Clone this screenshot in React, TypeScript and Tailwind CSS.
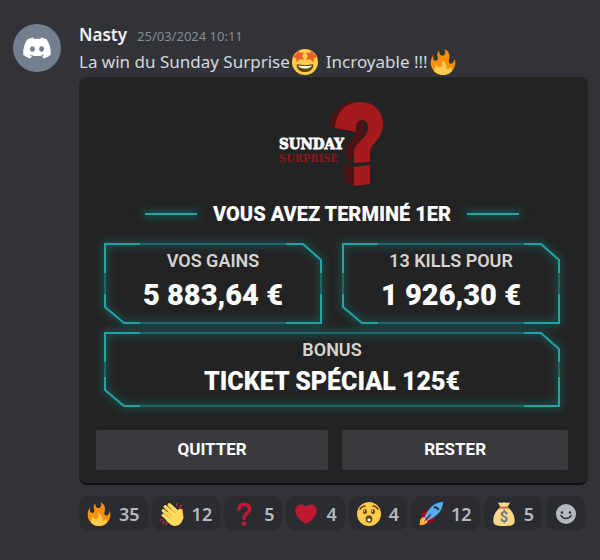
import type { ReactNode } from "react";
import { FaDiscord } from "react-icons/fa";

type IconProps = { className?: string };

function FireEmoji({ className }: IconProps) {
  return (
    <svg viewBox="0 0 36 36" className={className} aria-hidden="true">
      <path
        fill="#F4900C"
        d="M35 19c0-2.062-.367-4.039-1.04-5.868-.46 5.389-3.333 8.157-6.335 6.868-2.812-1.208-.917-5.917-.777-8.164.236-3.809-.012-8.169-6.931-11.794 2.875 5.5.333 8.917-2.333 9.125-2.958.231-5.667-2.542-4.667-7.042-3.238 2.386-3.332 6.402-2.333 9 1.042 2.708-.042 4.958-2.583 5.208-2.84.28-4.418-3.041-2.963-8.333C2.52 10.965 1 14.805 1 19c0 9.389 7.611 17 17 17s17-7.611 17-17z"
      />
      <path
        fill="#FFCC4D"
        d="M28.394 23.999c.148 3.084-2.561 4.293-4.019 3.709-2.106-.843-1.541-2.291-2.083-5.291s-2.625-5.083-5.708-6c2.25 6.333-1.247 8.667-3.08 9.084-1.872.426-3.753-.001-3.968-4.007C7.352 23.668 6 26.676 6 30c0 .368.023.73.055 1.09C9.125 34.124 13.342 36 18 36s8.875-1.876 11.945-4.91c.032-.36.055-.722.055-1.09 0-2.187-.584-4.236-1.606-6.001z"
      />
    </svg>
  );
}

function StarStruckEmoji({ className }: IconProps) {
  return (
    <svg viewBox="0 0 36 36" className={className} aria-hidden="true">
      <circle cx="18" cy="18" r="18" fill="#FFCC4D" />
      <path
        fill="#E95F28"
        d="M8.5 1l2.6 4.6 5.4-.6-2.6 5 2.6 5-5.6-.8-4.4 4.2-.9-5.6L.2 10.2l5.4-2.8zM27.5 1l-2.6 4.6-5.4-.6 2.6 5-2.6 5 5.6-.8 4.4 4.2.9-5.6 5.4-2.6-5.4-2.8z"
      />
      <path
        fill="#664500"
        d="M18 22c-4.2 0-7-.5-9.6-1-.7-.1-1.9 0-1.9 1.7C6.5 27 11 32 18 32s11.5-5 11.5-9.3c0-1.7-1.2-1.8-1.9-1.7-2.6.5-5.4 1-9.6 1z"
      />
      <path
        fill="#fff"
        d="M8.5 22.7s3.5 1 9.5 1 9.5-1 9.5-1-1.5 4.3-9.5 4.3-9.5-4.3-9.5-4.3z"
      />
    </svg>
  );
}

function ClapEmoji({ className }: IconProps) {
  return (
    <svg viewBox="0 0 36 36" className={className} aria-hidden="true">
      <g stroke="#DD2E44" strokeWidth="1.8" strokeLinecap="round">
        <path d="M25 5l1-3M29 8l3-3M31 12l3-1M3 26l-2 1M6 29l-2 3M10 31l-1 3" />
      </g>
      <path
        d="M14 4l13 10 2-2c2-2 4 0 4 3l1 9-7 10"
        fill="#EF9645"
        stroke="#EF9645"
        strokeWidth="3"
        strokeLinejoin="round"
      />
      <g stroke="#FFDC5D" strokeLinecap="round" strokeWidth="5">
        <path d="M14 4l13 12M8 7l14 13M5 13l14 12M5 20l12 10" />
      </g>
      <path
        fill="#FFDC5D"
        d="M14 10l13 5c0-5 4-6 5-3 1 4 3 9 2 14-1 6-6 10-12 10-5 0-10-5-14-10z"
      />
      <path
        d="M12 6l11 10M7 11l11 10M6 17l10 8"
        stroke="#EF9645"
        strokeWidth="1.2"
        strokeLinecap="round"
      />
    </svg>
  );
}

function QuestionEmoji({ className }: IconProps) {
  return (
    <svg viewBox="0 0 36 36" className={className} aria-hidden="true">
      <path
        d="M10.5 10.5c1-4.5 4-7 8-7 5 0 8 3 8 7 0 6.5-8.5 6-8.5 14"
        fill="none"
        stroke="#BE1931"
        strokeWidth="5.5"
        strokeLinecap="round"
      />
      <circle cx="18" cy="32.5" r="3.5" fill="#BE1931" />
    </svg>
  );
}

function HeartEmoji({ className }: IconProps) {
  return (
    <svg viewBox="-2 -2 40 40" className={className} aria-hidden="true">
      <path
        fill="#BE1931"
        d="M35.885 11.833c0-5.45-4.418-9.868-9.867-9.868-3.308 0-6.227 1.633-8.018 4.129-1.791-2.496-4.71-4.129-8.017-4.129-5.45 0-9.868 4.417-9.868 9.868 0 .772.098 1.52.266 2.241C1.751 22.587 11.216 31.568 18 34.034c6.783-2.466 16.249-11.447 17.617-19.959.17-.721.268-1.469.268-2.242z"
      />
    </svg>
  );
}

function AstonishedEmoji({ className }: IconProps) {
  return (
    <svg viewBox="0 0 36 36" className={className} aria-hidden="true">
      <circle cx="18" cy="18" r="18" fill="#FFCC4D" />
      <path
        d="M4.5 11C6 8 8.5 6 12 6M31.5 11C30 8 27.5 6 24 6"
        fill="none"
        stroke="#664500"
        strokeWidth="2"
        strokeLinecap="round"
      />
      <ellipse cx="12" cy="14.5" rx="3" ry="3.5" fill="#664500" />
      <ellipse cx="24" cy="14.5" rx="3" ry="3.5" fill="#664500" />
      <circle cx="11.2" cy="13.5" r="1" fill="#F5F8FA" />
      <circle cx="23.2" cy="13.5" r="1" fill="#F5F8FA" />
      <ellipse cx="18" cy="25.5" rx="5" ry="5.5" fill="#664500" />
      <ellipse cx="18" cy="27" rx="2.5" ry="2.2" fill="#F5F8FA" />
    </svg>
  );
}

function RocketEmoji({ className }: IconProps) {
  return (
    <svg viewBox="0 0 36 36" className={className} aria-hidden="true">
      <path
        fill="#A0041E"
        d="M3 21c1-4 4-8 8-9l4 3-6 9zM15 33c4-1 8-4 9-8l-3-4-9 6z"
      />
      <path fill="#FFAC33" d="M1 35c0-7 1-11 5-12 5-1 8 2 7 6-1 4-5 6-12 6z" />
      <path fill="#FFCC4D" d="M5 31c0-4 1-6 3-6s3 1 3 3-2 3-6 3z" />
      <path
        fill="#55ACEE"
        d="M36 0s-8 0-15 5C15 10 9 19 8 24l4 4c5-1 14-7 19-13 5-7 5-15 5-15z"
      />
      <path fill="#A0041E" d="M7 30c3-5 8-11 12-13-2 5-7 10-12 13z" />
      <path
        d="M22 8c3-1 6 1 7 4"
        fill="none"
        stroke="#292F33"
        strokeWidth="3"
      />
    </svg>
  );
}

function MoneyBagEmoji({ className }: IconProps) {
  return (
    <svg viewBox="0 0 36 36" className={className} aria-hidden="true">
      <path
        fill="#FDD888"
        d="M9 1c3-1 3 1 6 0s3-1 6 0 4-1 6 0l-4 7c7 4 11 12 11 20 0 6-4 8-16 8S2 34 2 28c0-8 4-16 11-20z"
      />
      <path
        d="M12 8.5h12"
        stroke="#BF6952"
        strokeWidth="2.8"
        strokeLinecap="round"
      />
      <text
        x="18"
        y="30"
        textAnchor="middle"
        fill="#67757F"
        fontSize="22"
        fontFamily="Roboto, sans-serif"
      >
        $
      </text>
    </svg>
  );
}

function SmileyIcon({ className }: IconProps) {
  return (
    <svg viewBox="0 0 20 20" className={className} aria-hidden="true">
      <circle cx="10" cy="10" r="10" fill="#b5bac1" />
      <circle cx="6" cy="8.5" r="1.2" fill="#2b2c31" />
      <circle cx="14" cy="8.5" r="1.2" fill="#2b2c31" />
      <path
        d="M5 11.5c2 4 8 4 10 0"
        fill="none"
        stroke="#2b2c31"
        strokeWidth="1.6"
        strokeLinecap="round"
      />
    </svg>
  );
}

function SundayLogo() {
  return (
    <svg
      viewBox="0 0 116 92"
      className="h-[92px] w-[116px]"
      role="img"
      aria-label="Sunday Surprise"
    >
      <g fill="#4d1214">
        <path d="M56 30C56 15 66 4 82 4l6 0-16 27zM82 22l8 1 1 12-14 28 3 2-8-3V52c2-8 10-12 10-19z" />
        <path d="M70 66l10 3v19l-9-4z" />
      </g>
      <g fill="#a51a1c">
        <path d="M61 30C62 14 72 4 86 4c14 0 23 9 23 22 0 16-12 18-13 29v9l-16 1V54c1-10 14-14 14-24 0-5-2-8-6-8-5 0-7 5-6 12z" />
        <path d="M80 69l16-2v19l-16 2z" />
      </g>
      <text
        x="5"
        y="51"
        fill="#ffffff"
        stroke="#ffffff"
        strokeWidth="0.8"
        fontSize="15"
        fontWeight="700"
        fontFamily="'DejaVu Serif Condensed', 'DejaVu Serif', serif"
      >
        SUNDAY
      </text>
      <text
        x="5"
        y="64"
        fill="#8c1a1d"
        fontSize="11"
        fontWeight="700"
        fontFamily="'DejaVu Serif Condensed', 'DejaVu Serif', serif"
      >
        SURPRISE
      </text>
    </svg>
  );
}

const CORNERS = [
  { place: "left-0 top-0", d: "M1 30V1H36" },
  { place: "right-0 top-0", d: "M0 1H17L35 17V30" },
  { place: "bottom-0 left-0", d: "M1 0V13L20 29H36" },
  { place: "bottom-0 right-0", d: "M35 0V29H0" },
];

function NeonFrame({
  label,
  children,
  className = "",
}: {
  label: string;
  children: ReactNode;
  className?: string;
}) {
  return (
    <div
      className={`relative flex flex-col items-center text-center ${className}`}
    >
      <div className="absolute inset-0 drop-shadow-[0_0_4px_#12a3a3]">
        <div className="absolute inset-x-9 inset-y-0 border-y-2 border-[#1f6668]" />
        <div className="absolute inset-x-0 inset-y-7 border-x-2 border-[#1f6668]" />
        {CORNERS.map((corner) => (
          <svg
            key={corner.place}
            viewBox="0 0 36 30"
            className={`absolute h-[30px] w-9 ${corner.place}`}
            fill="none"
            stroke="#23a3a3"
            strokeWidth="2"
            aria-hidden="true"
          >
            <path d={corner.d} />
          </svg>
        ))}
      </div>
      <p className="relative text-lg leading-6 font-semibold text-[#d4d4d4]">
        {label}
      </p>
      {children}
    </div>
  );
}

const REACTIONS = [
  { name: "fire", Icon: FireEmoji, count: 35 },
  { name: "clap", Icon: ClapEmoji, count: 12 },
  { name: "question", Icon: QuestionEmoji, count: 5 },
  { name: "hearts", Icon: HeartEmoji, count: 4 },
  { name: "astonished", Icon: AstonishedEmoji, count: 4 },
  { name: "rocket", Icon: RocketEmoji, count: 12 },
  { name: "moneybag", Icon: MoneyBagEmoji, count: 5 },
];

function Reactions() {
  return (
    <div className="mt-[11px] flex flex-wrap gap-1">
      {REACTIONS.map(({ name, Icon, count }) => (
        <button
          key={name}
          type="button"
          aria-label={`${name} ${count}`}
          className="flex h-[35px] items-center gap-2 rounded-[10px] bg-[#2b2c31] px-2 text-lg font-semibold text-[#b5bac1]"
        >
          <Icon className="size-6" />
          {count}
        </button>
      ))}
      <button
        type="button"
        aria-label="Add reaction"
        className="flex h-[35px] items-center rounded-[10px] bg-[#2b2c31] px-[10px]"
      >
        <SmileyIcon className="size-5" />
      </button>
    </div>
  );
}

function ResultCard() {
  return (
    <section className="mt-[2px] rounded-lg border-b-2 border-[#101013] bg-[#232323] pt-[21px] pr-5 pb-[13px] pl-[17px] font-[Roboto,sans-serif] text-white">
      <div className="flex justify-center">
        <SundayLogo />
      </div>
      <div className="mt-[10px] flex items-center justify-center gap-4">
        <span className="h-[2px] w-[52px] bg-[#23a3a3] shadow-[0_0_8px_1px_#127c7c]" />
        <h1 className="text-xl leading-7 font-black">VOUS AVEZ TERMINÉ 1ER</h1>
        <span className="h-[2px] w-[52px] bg-[#23a3a3] shadow-[0_0_8px_1px_#127c7c]" />
      </div>

      <div className="mx-2 mt-[15px] grid grid-cols-2 gap-x-5 gap-y-2">
        <NeonFrame label="VOS GAINS" className="pt-[6px] pb-[9px]">
          <p className="relative mt-[2px] text-[29px] leading-10 font-black">
            5 883,64 €
          </p>
        </NeonFrame>
        <NeonFrame label="13 KILLS POUR" className="pt-[6px] pb-[9px]">
          <p className="relative mt-[2px] text-[29px] leading-10 font-black">
            1 926,30 €
          </p>
        </NeonFrame>
        <NeonFrame label="BONUS" className="col-span-2 pt-[6px] pb-[5px]">
          <p className="relative text-[25px] leading-10 font-black">
            TICKET SPÉCIAL 125€
          </p>
        </NeonFrame>
      </div>

      <div className="mt-[23px] grid grid-cols-[36fr_35fr] gap-[14px] text-[17px] font-bold">
        <button type="button" className="h-10 rounded-xs bg-[#393940]">
          QUITTER
        </button>
        <button type="button" className="h-10 rounded-xs bg-[#393940]">
          RESTER
        </button>
      </div>
    </section>
  );
}

export default function App() {
  return (
    <main className="flex min-h-screen items-start gap-[18px] bg-[#323338] pt-[22px] pr-3 pb-7 pl-[13px] font-['Noto_Sans',sans-serif]">
      <div className="mt-[2px] flex size-12 shrink-0 items-center justify-center rounded-full bg-[#747f8d]">
        <FaDiscord className="size-[30px] text-white" />
      </div>
      <article className="min-w-0 flex-1">
        <header className="flex items-baseline gap-[10px] leading-[26px]">
          <span className="text-[17px] font-semibold text-[#f2f3f5]">
            Nasty
          </span>
          <time className="text-[13px] leading-[26px] text-[#878b94]">
            25/03/2024 10:11
          </time>
        </header>
        <p className="flex flex-wrap items-center text-[17px] leading-[26px] text-[#d5d8dc]">
          La win du Sunday Surprise
          <StarStruckEmoji className="mr-2 ml-[2px] size-[26px]" />
          Incroyable !!!
          <FireEmoji className="ml-[2px] size-[26px]" />
        </p>
        <ResultCard />
        <Reactions />
      </article>
    </main>
  );
}
